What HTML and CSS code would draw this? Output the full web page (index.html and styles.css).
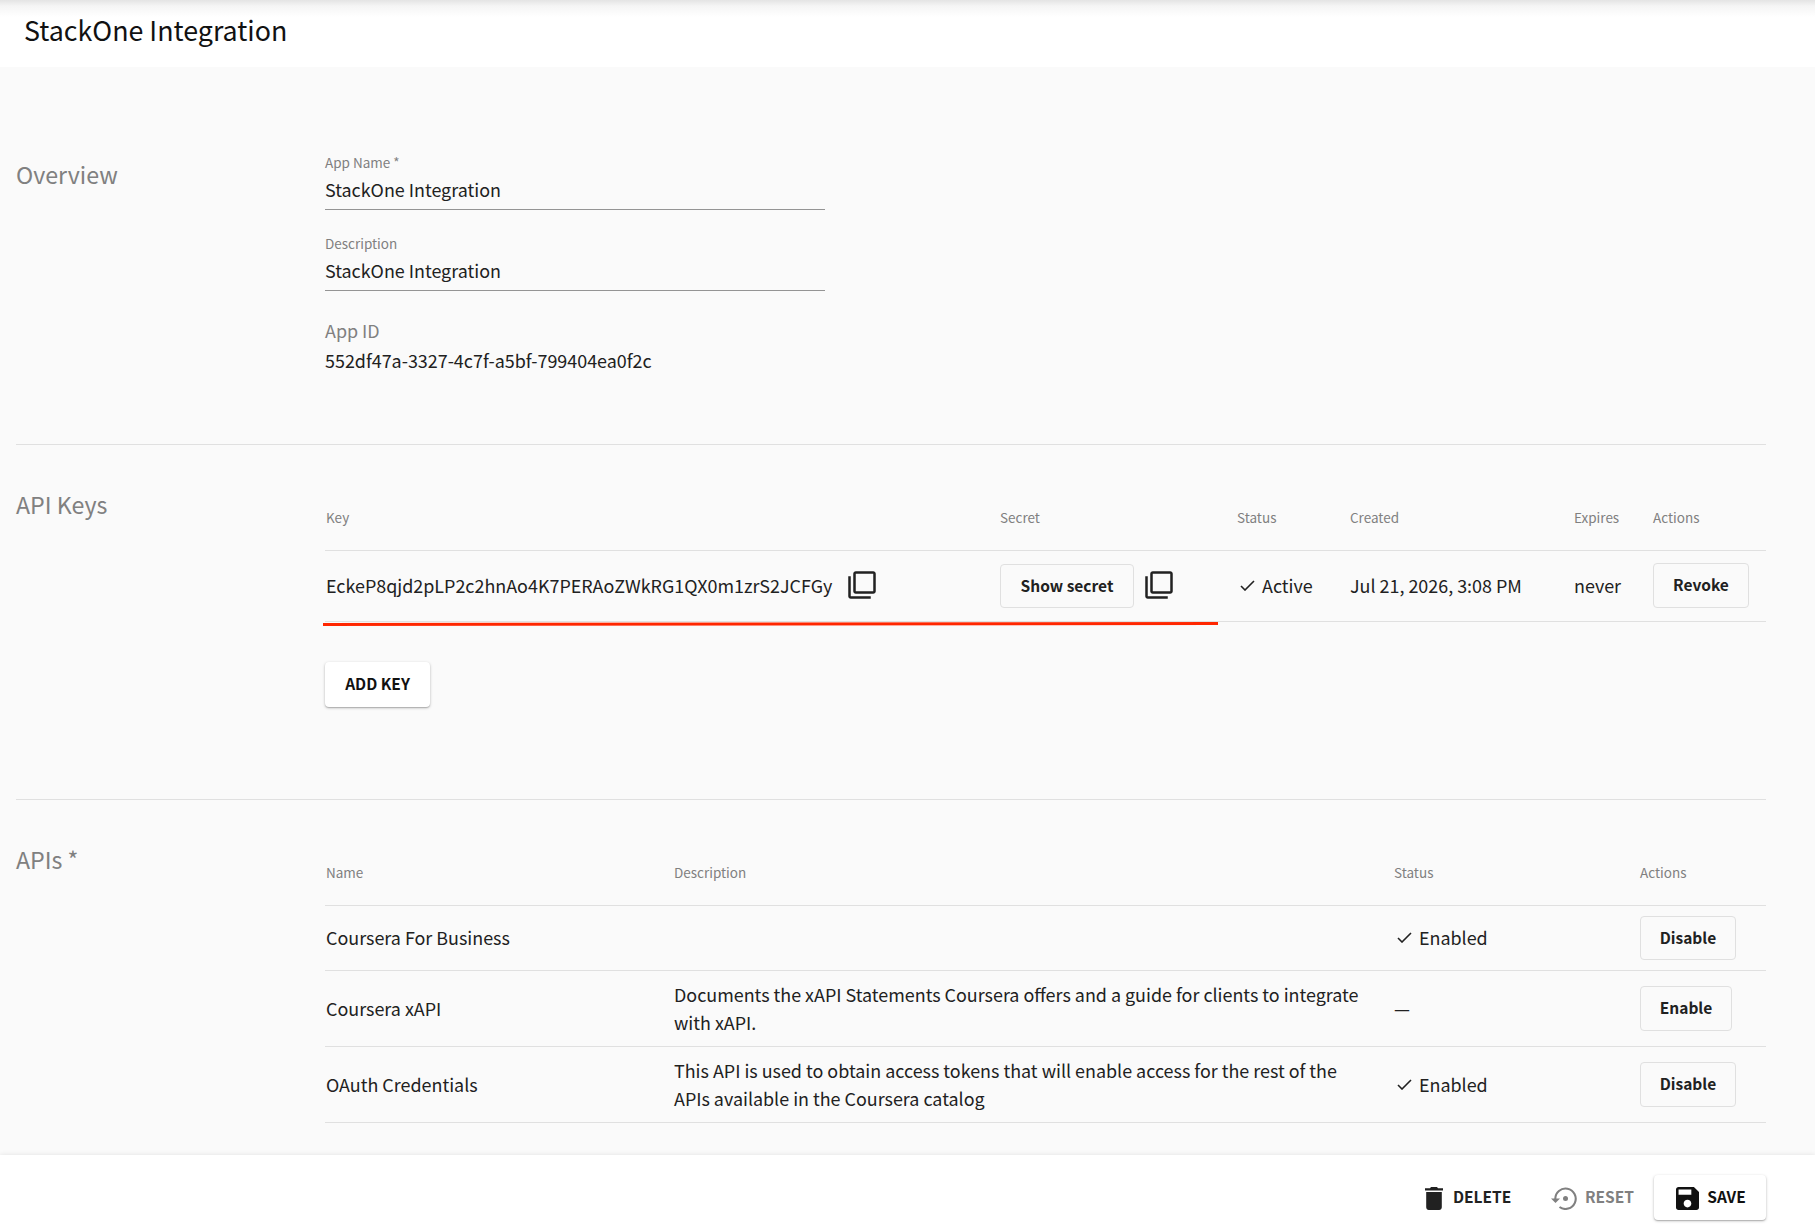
FILE: index.html
```html
<!DOCTYPE html>
<html lang="en">
  <head>
    <meta charset="UTF-8" />
    <meta name="viewport" content="width=device-width, initial-scale=1.0" />
    <title>StackOne Integration</title>
    <link rel="stylesheet" href="styles.css">
  </head>
  <body>
    <svg class="sprite">
      <symbol id="copy" viewBox="0 0 24 24">
        <path d="M3 5H1v16c0 1.1.9 2 2 2h16v-2H3V5zm18-4H7c-1.1 0-2 .9-2 2v14c0 1.1.9 2 2 2h14c1.1 0 2-.9 2-2V3c0-1.1-.9-2-2-2zm0 16H7V3h14v14z" />
      </symbol>
      <symbol id="check" viewBox="0 0 15 11">
        <path d="M1 6l4 4L14 1" fill="none" stroke="currentColor" stroke-width="1.6" />
      </symbol>
    </svg>

    <header class="page-header">
      <h1>StackOne Integration</h1>
    </header>

    <main>
      <section class="section overview">
        <h2>Overview</h2>
        <div class="section-body">
          <div class="field">
            <label>App Name *</label>
            <div class="field-value">StackOne Integration</div>
          </div>
          <div class="field">
            <label>Description</label>
            <div class="field-value">StackOne Integration</div>
          </div>
          <div class="app-id">
            <div class="app-id-label">App ID</div>
            <div>552df47a-3327-4c7f-a5bf-799404ea0f2c</div>
          </div>
        </div>
      </section>

      <section class="section keys">
        <h2>API Keys</h2>
        <div class="section-body">
          <table class="keys-table">
            <colgroup>
              <col class="col-key" />
              <col class="col-secret" />
              <col class="col-status" />
              <col class="col-created" />
              <col class="col-expires" />
              <col />
            </colgroup>
            <thead>
              <tr>
                <th>Key</th>
                <th>Secret</th>
                <th>Status</th>
                <th>Created</th>
                <th>Expires</th>
                <th>Actions</th>
              </tr>
            </thead>
            <tbody>
              <tr>
                <td>
                  <div class="cell">
                    <span class="key-text">EckeP8qjd2pLP2c2hnAo4K7PERAoZWkRG1QX0m1zrS2JCFGy</span>
                    <svg class="copy-icon"><use href="#copy" /></svg>
                  </div>
                </td>
                <td class="action">
                  <div class="cell">
                    <button class="btn btn-outline btn-secret">Show secret</button>
                    <svg class="copy-icon"><use href="#copy" /></svg>
                  </div>
                </td>
                <td>
                  <div class="cell status">
                    <svg class="check-icon"><use href="#check" /></svg>
                    <span>Active</span>
                  </div>
                </td>
                <td>Jul 21, 2026, 3:08 PM</td>
                <td>never</td>
                <td class="action action-revoke"><button class="btn btn-outline btn-revoke">Revoke</button></td>
              </tr>
            </tbody>
          </table>
          <!-- hand drawn underline over the key row -->
          <svg class="underline" viewBox="0 0 895 6">
            <path d="M0 3.500L895 2.500" stroke="#ff2600" stroke-width="3" />
          </svg>
          <button class="btn btn-raised btn-add">ADD KEY</button>
        </div>
      </section>

      <section class="section apis">
        <h2>APIs *</h2>
        <div class="section-body">
          <table class="apis-table">
            <colgroup>
              <col class="col-name" />
              <col class="col-desc" />
              <col class="col-api-status" />
              <col />
            </colgroup>
            <thead>
              <tr>
                <th>Name</th>
                <th>Description</th>
                <th>Status</th>
                <th>Actions</th>
              </tr>
            </thead>
            <tbody>
              <tr class="short">
                <td>Coursera For Business</td>
                <td></td>
                <td>
                  <div class="cell status">
                    <svg class="check-icon"><use href="#check" /></svg>
                    <span>Enabled</span>
                  </div>
                </td>
                <td class="action"><button class="btn btn-outline btn-disable">Disable</button></td>
              </tr>
              <tr>
                <td>Coursera xAPI</td>
                <td>Documents the xAPI Statements Coursera offers and a guide for clients to integrate<br />with xAPI.</td>
                <td><span class="dash">—</span></td>
                <td class="action"><button class="btn btn-outline btn-enable">Enable</button></td>
              </tr>
              <tr>
                <td>OAuth Credentials</td>
                <td>This API is used to obtain access tokens that will enable access for the rest of the<br />APIs available in the Coursera catalog</td>
                <td>
                  <div class="cell status">
                    <svg class="check-icon"><use href="#check" /></svg>
                    <span>Enabled</span>
                  </div>
                </td>
                <td class="action"><button class="btn btn-outline btn-disable">Disable</button></td>
              </tr>
            </tbody>
          </table>
        </div>
      </section>
    </main>

    <footer class="page-footer">
      <button class="btn btn-flat btn-delete">
        <svg viewBox="0 0 18 23" width="18" height="23">
          <path d="M0 1.300h5L6 0h6l1 1.300h5v2.200H0zM1.200 5h15.600v15.300c0 1.600-1.100 2.700-2.600 2.700H3.800c-1.500 0-2.600-1.100-2.600-2.700z" />
        </svg>
        DELETE
      </button>
      <button class="btn btn-flat btn-reset">
        <svg viewBox="0 0 26 23" width="26" height="23">
          <path d="M4.300 12A10.200 10.200 0 1 1 8.500 20" fill="none" stroke="currentColor" stroke-width="2.100" />
          <path d="M0 11.500h9L4.500 16z" />
          <circle cx="14.500" cy="11.500" r="2.500" />
        </svg>
        RESET
      </button>
      <button class="btn btn-raised btn-save">
        <svg viewBox="3 3 18 18" width="23" height="23">
          <path d="M17 3H5c-1.110 0-2 .9-2 2v14c0 1.100.89 2 2 2h14c1.100 0 2-.9 2-2V7l-4-4zm-5 16c-1.660 0-3-1.340-3-3s1.340-3 3-3 3 1.340 3 3-1.340 3-3 3zm3-10H5V5h10v4z" />
        </svg>
        SAVE
      </button>
    </footer>
  </body>
</html>
```
FILE: styles.css
```css
* {
  box-sizing: border-box;
}

body {
  margin: 0;
  height: 1230px;
  display: flex;
  flex-direction: column;
  overflow: hidden;
  background: #fafafa;
  color: #212121;
  font-family: "Noto Sans CJK SC", "Noto Sans", sans-serif;
  font-size: 17.92px;
  line-height: 28px;
}

.sprite {
  display: none;
}

svg {
  fill: currentColor;
  flex-shrink: 0;
}

/* Header */
.page-header {
  height: 67px;
  padding: 10px 24px 0;
  background: linear-gradient(#e4e4e4, #f5f5f5 6px, #fff 17px);
}

h1 {
  margin: 0;
  font-size: 26.8px;
  font-weight: 400;
  line-height: 40px;
  color: #111;
}

main {
  flex: 1;
  padding: 0 49px 0 16px;
}

/* Sections: title on the left, content on the right */
.section {
  display: grid;
  grid-template-columns: 309px 1fr;
  border-bottom: 1px solid #e0e0e0;
}

.section h2 {
  margin: 0;
  padding-top: 1px;
  font-size: 23.2px;
  font-weight: 400;
  line-height: 32px;
  color: #808080;
}

.overview {
  height: 378px;
  padding-top: 86px;
}

.overview h2 {
  padding-top: 5px;
}

.field {
  width: 500px;
  height: 57px;
  margin-bottom: 24px;
  border-bottom: 1px solid #949494;
}

.field label {
  display: block;
  font-size: 13.5px;
  line-height: 18px;
  color: #808080;
}

.field-value {
  margin-top: 4px;
}

.app-id {
  margin-top: 25px;
  line-height: 29.5px;
}

.app-id-label {
  color: #808080;
}

.keys {
  position: relative;
  height: 355px;
  padding-top: 42px;
}

.apis {
  padding-top: 42px;
  border-bottom: none;
}

/* Tables */
table {
  width: 1441px;
  table-layout: fixed;
  border-spacing: 0;
}

th {
  height: 64px;
  padding: 0 0 3px 1px;
  border-bottom: 1px solid #e0e0e0;
  font-size: 13.5px;
  font-weight: 400;
  text-align: left;
  color: #808080;
}

td {
  height: 76px;
  padding: 0 0 1px 1px;
  border-bottom: 1px solid #e0e0e0;
  white-space: nowrap;
}

.keys-table td {
  height: 71px;
  padding-bottom: 2px;
}

.short td {
  height: 65px;
  padding-bottom: 2px;
}

td.action,
.keys-table td.action {
  padding-bottom: 0;
}

.keys-table td.action-revoke {
  padding-bottom: 1px;
}

.col-key {
  width: 674px;
}

.col-secret {
  width: 237px;
}

.col-status {
  width: 113px;
}

.col-created {
  width: 224px;
}

.col-expires {
  width: 79px;
}

.col-name {
  width: 348px;
}

.col-desc {
  width: 720px;
}

.col-api-status {
  width: 246px;
}

.cell {
  display: flex;
  align-items: center;
}

.key-text {
  width: 521px;
}

.copy-icon {
  width: 30px;
  height: 30px;
}

.btn-secret + .copy-icon {
  margin: 0 0 2px 10px;
}

.check-icon {
  width: 15px;
  height: 11px;
  margin: 0 7px 0 3px;
}

.underline {
  position: absolute;
  left: 307px;
  top: 176px;
  width: 895px;
  height: 6px;
}

/* Buttons */
.btn {
  display: flex;
  align-items: center;
  justify-content: center;
  height: 45px;
  padding: 0 0 3px;
  border: none;
  border-radius: 4px;
  background: none;
  font-family: inherit;
  font-size: 15.5px;
  font-weight: 700;
  line-height: 24px;
  color: #212121;
}

.btn-outline {
  border: 1px solid #e0e0e0;
}

.btn-raised {
  background: #fff;
  color: #111;
  box-shadow: 0 1px 3px rgba(0, 0, 0, 0.25), 0 1px 1px rgba(0, 0, 0, 0.15);
}

.btn-secret {
  width: 134px;
}

.btn-revoke {
  width: 96px;
}

.btn-disable {
  width: 96px;
}

.btn-enable {
  width: 92px;
}

.btn-secret,
.short .btn {
  height: 44px;
  padding-bottom: 2px;
}

.btn-add {
  width: 105px;
  margin-top: 40px;
}

/* Footer */
.page-footer {
  display: flex;
  align-items: flex-start;
  height: 75px;
  padding: 20px 49px 0 0;
  justify-content: flex-end;
  background: #fff;
  box-shadow: 0 0 5px rgba(0, 0, 0, 0.1);
}

.page-footer svg {
  margin-top: 5px;
}

.btn-flat {
  justify-content: flex-start;
}

.btn-delete {
  width: 126px;
  gap: 10px;
}

.btn-reset {
  width: 103px;
  gap: 8px;
  color: #808080;
}

.btn-save {
  width: 112px;
  gap: 8px;
  padding-left: 2px;
}
```
